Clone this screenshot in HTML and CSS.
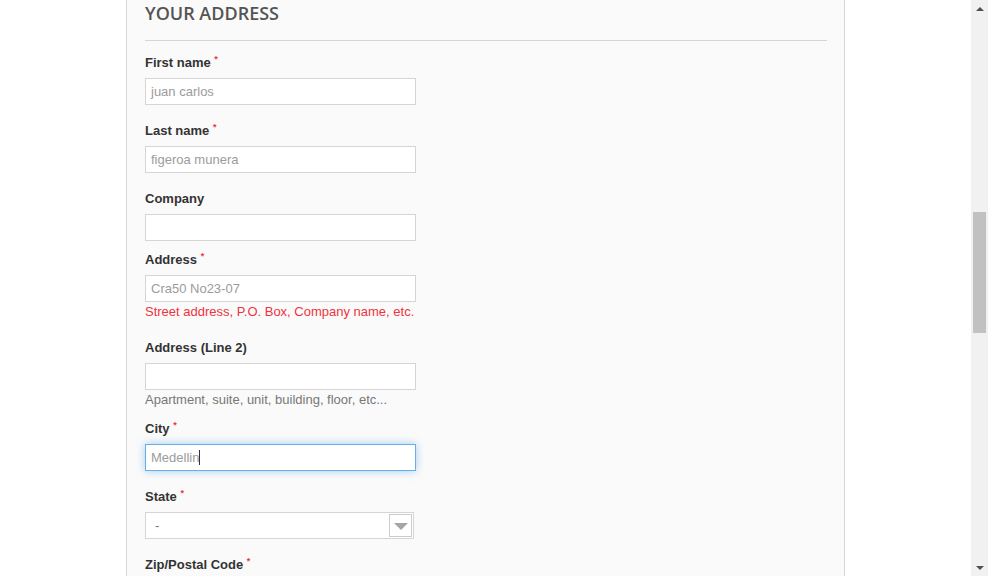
FILE: index.html
```html
<!DOCTYPE html>
<html>
<head>
<meta charset="utf-8">
<link rel="stylesheet" href="styles.css">
</head>
<body>
<div class="page">
  <div class="viewport">
    <div class="panel">
      <h3 class="heading">YOUR ADDRESS</h3>
      <div class="rule"></div>
      <div class="group">
        <label class="label">First name <sup class="req">*</sup></label>
        <div class="input">juan carlos</div>
      </div>
      <div class="group">
        <label class="label">Last name <sup class="req">*</sup></label>
        <div class="input">figeroa munera</div>
      </div>
      <div class="group group-tight">
        <label class="label">Company</label>
        <div class="input"></div>
      </div>
      <div class="group group-help">
        <label class="label">Address <sup class="req">*</sup></label>
        <div class="input">Cra50 No23-07</div>
        <p class="help help-red">Street address, P.O. Box, Company name, etc.</p>
      </div>
      <div class="group group-help2">
        <label class="label">Address (Line 2)</label>
        <div class="input"></div>
        <p class="help">Apartment, suite, unit, building, floor, etc...</p>
      </div>
      <div class="group">
        <label class="label">City <sup class="req">*</sup></label>
        <div class="input input-focus">Medellin<span class="caret"></span></div>
      </div>
      <div class="group">
        <label class="label">State <sup class="req">*</sup></label>
        <div class="select">
          <span class="select-text">-</span>
          <span class="select-arrow"><span class="tri"></span></span>
        </div>
      </div>
      <div class="group">
        <label class="label">Zip/Postal Code <sup class="req">*</sup></label>
      </div>
    </div>
  </div>
  <div class="scrollbar">
    <div class="sb-btn"><span class="sb-up"></span></div>
    <div class="sb-track"><div class="sb-thumb"></div></div>
    <div class="sb-btn"><span class="sb-down"></span></div>
  </div>
</div>
</body>
</html>
```

FILE: styles.css
```css
html, body {
  margin: 0;
  padding: 0;
  background: #ffffff;
  overflow: hidden;
}
.page {
  display: flex;
  width: 988px;
  height: 576px;
  overflow: hidden;
}
.viewport {
  flex: 1;
  height: 576px;
  overflow: hidden;
  padding-left: 126px;
}
.panel {
  width: 682px;
  min-height: 600px;
  background: #fafafa;
  border-left: 1px solid #d6d6d6;
  border-right: 1px solid #d6d6d6;
  padding: 1px 17px 0 18px;
  font-family: "Liberation Sans", Arial, sans-serif;
  font-size: 13px;
  color: #333;
}
.heading {
  margin: 0;
  font-family: "Open Sans", sans-serif;
  font-weight: 600;
  font-size: 18px;
  line-height: 24px;
  color: #555454;
}
.rule {
  margin-top: 15px;
  height: 1px;
  background: #d6d4d4;
}
.group {
  margin-bottom: 17px;
}
.rule + .group {
  margin-top: 13px;
}
.group-tight {
  margin-bottom: 10px;
}
.group-help {
  margin-bottom: 18px;
}
.group-help2 {
  margin-bottom: 11px;
}
.label {
  display: block;
  font-weight: bold;
  line-height: 18px;
  margin-bottom: 6px;
  color: #333;
}
.req {
  color: #f13340;
  font-size: 9px;
  vertical-align: top;
  position: relative;
  top: -4px;
  font-weight: bold;
}
.input {
  box-sizing: border-box;
  width: 271px;
  height: 27px;
  border: 1px solid #d6d4d4;
  background: #fff;
  padding: 0 5px;
  line-height: 25px;
  color: #9c9b9b;
  font-size: 13px;
}
.input-focus {
  border-color: #66afe9;
  box-shadow: 0 0 8px rgba(102, 175, 233, 0.6);
}
.caret {
  display: inline-block;
  width: 1px;
  height: 15px;
  background: #333;
  vertical-align: -3px;
}
.help {
  margin: 0;
  padding-top: 1px;
  line-height: 18px;
  color: #777;
  font-size: 13px;
}
.help-red {
  color: #f13340;
}
.select {
  box-sizing: border-box;
  width: 269px;
  height: 27px;
  border: 1px solid #d6d4d4;
  background: #fff;
  display: flex;
  align-items: center;
  justify-content: space-between;
  padding: 0 1px 0 9px;
}
.select-text {
  color: #777;
  line-height: 25px;
}
.select-arrow {
  box-sizing: border-box;
  width: 23px;
  height: 23px;
  border: 1px solid #ccc;
  background: #fff;
  display: flex;
  align-items: center;
  justify-content: center;
}
.tri {
  width: 0;
  height: 0;
  border-left: 7px solid transparent;
  border-right: 7px solid transparent;
  border-top: 7px solid #a5a5a5;
  margin-top: 1px;
}
.scrollbar {
  width: 17px;
  height: 576px;
  background: #f1f1f1;
  display: flex;
  flex-direction: column;
}
.sb-btn {
  height: 17px;
  display: flex;
  align-items: center;
  justify-content: center;
}
.sb-up {
  width: 0;
  height: 0;
  border-left: 4px solid transparent;
  border-right: 4px solid transparent;
  border-bottom: 4px solid #505050;
}
.sb-down {
  width: 0;
  height: 0;
  border-left: 4px solid transparent;
  border-right: 4px solid transparent;
  border-top: 4px solid #505050;
}
.sb-track {
  flex: 1;
  padding-top: 195px;
  display: flex;
  justify-content: center;
}
.sb-thumb {
  width: 13px;
  height: 121px;
  background: #c1c1c1;
}
```
